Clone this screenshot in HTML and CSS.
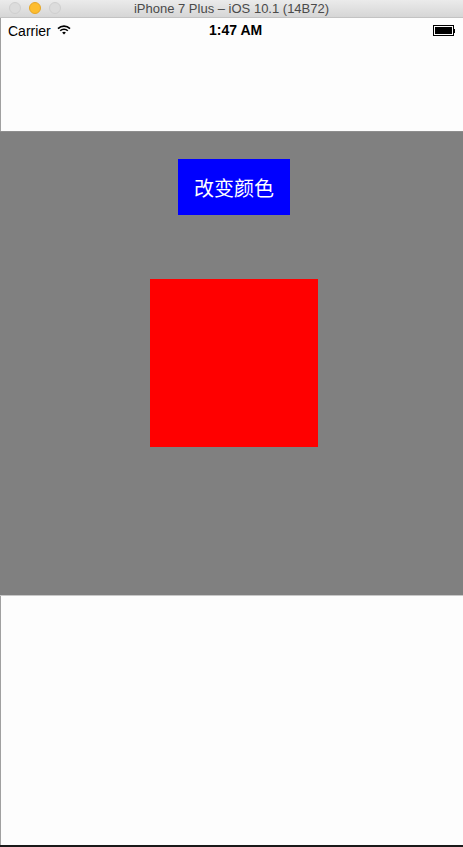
FILE: index.html
```html
<!DOCTYPE html>
<html>
<head>
<meta charset="utf-8">
<link rel="stylesheet" href="styles.css">
</head>
<body>
<div class="window">
  <div class="titlebar">
    <div class="lights">
      <span class="light"></span>
      <span class="light yellow"></span>
      <span class="light"></span>
    </div>
    <div class="title">iPhone 7 Plus – iOS 10.1 (14B72)</div>
  </div>
  <div class="screen">
    <div class="statusbar">
      <div class="carrier">Carrier
        <svg class="wifi" width="14" height="10" viewBox="0 0 14 10">
          <path d="M1 3.6 A8.5 8.5 0 0 1 13 3.6" fill="none" stroke="#000" stroke-width="1.6"/>
          <path d="M3.2 5.8 A5.3 5.3 0 0 1 10.8 5.8" fill="none" stroke="#000" stroke-width="1.6"/>
          <path d="M7 9.6 L5.1 7.6 A2.7 2.7 0 0 1 8.9 7.6 Z" fill="#000"/>
        </svg>
      </div>
      <div class="time">1:47 AM</div>
      <div class="battery"><span class="cell"></span><span class="nub"></span></div>
    </div>
    <div class="spacer-top"></div>
    <div class="panel">
      <div class="btn">改变颜色</div>
      <div class="square"></div>
    </div>
    <div class="spacer-bottom"></div>
  </div>
  <div class="dock"></div>
</div>
</body>
</html>
```

FILE: styles.css
```css
html, body {
  margin: 0;
  padding: 0;
  background: #fdfdfd;
}
.window {
  width: 463px;
  height: 847px;
  display: flex;
  flex-direction: column;
  overflow: hidden;
}
.titlebar {
  height: 18px;
  flex: none;
  background: linear-gradient(#ebebeb, #d6d6d6);
  border-bottom: 1px solid #c3c3c3;
  position: relative;
  display: flex;
  align-items: center;
  justify-content: center;
  box-sizing: border-box;
}
.lights {
  position: absolute;
  left: 9px;
  top: 2px;
  display: flex;
  gap: 8px;
}
.light {
  width: 12px;
  height: 12px;
  border-radius: 50%;
  background: #dcdcdc;
  border: 1px solid #cfcfcf;
  box-sizing: border-box;
}
.light.yellow {
  background: #fdbd2f;
  border-color: #e5a526;
}
.title {
  font-family: "Liberation Sans", Arial, sans-serif;
  font-size: 13px;
  color: #4a4a4a;
  line-height: 16px;
}
.screen {
  flex: 1;
  display: flex;
  flex-direction: column;
  border-left: 1px solid #a0a0a0;
  background: #fdfdfd;
}
.statusbar {
  height: 23px;
  flex: none;
  display: flex;
  align-items: center;
  justify-content: space-between;
  padding: 2px 8px 0 7px;
  box-sizing: border-box;
  font-family: "Liberation Sans", Arial, sans-serif;
  font-size: 14px;
  color: #000;
  position: relative;
}
.carrier {
  display: flex;
  align-items: center;
  gap: 6px;
  padding-top: 1px;
}
.wifi {
  margin-top: -2px;
}
.time {
  position: absolute;
  left: 208px;
  top: 4px;
  font-weight: bold;
  font-size: 14px;
}
.battery {
  display: flex;
  align-items: center;
}
.cell {
  background: #000;
  width: 17px;
  height: 7px;
  outline: 1px solid #000;
  outline-offset: 1px;
}
.nub {
  width: 1px;
  height: 4px;
  background: #000;
  margin-left: 2px;
}
.spacer-top {
  height: 90px;
  flex: none;
}
.panel {
  height: 465px;
  flex: none;
  background: #808080;
  border-top: 1px solid #8e8e8e;
  border-bottom: 1px solid #c8c8c8;
  box-sizing: border-box;
  display: flex;
  flex-direction: column;
  align-items: center;
  padding-top: 27px;
  margin-left: -1px;
}
.btn {
  width: 112px;
  height: 56px;
  background: #0000ff;
  color: #fff;
  font-family: "Noto Sans CJK SC", "Liberation Sans", sans-serif;
  font-size: 20px;
  display: flex;
  align-items: center;
  justify-content: center;
  margin-left: 5px;
}
.square {
  width: 168px;
  height: 168px;
  background: #ff0000;
  margin-top: 64px;
  margin-left: 5px;
}
.spacer-bottom {
  flex: 1;
}
.dock {
  height: 2px;
  flex: none;
  background: #1a1a1a;
}
```
